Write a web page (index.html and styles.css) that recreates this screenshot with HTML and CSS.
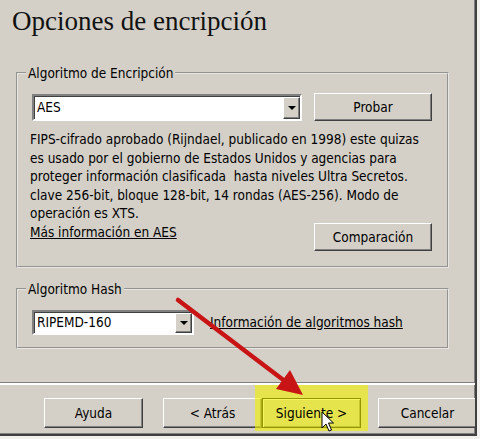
FILE: index.html
```html
<!DOCTYPE html>
<html lang="es">
<head>
  <meta charset="UTF-8">
  <title>Opciones de encripción</title>
  <link rel="stylesheet" href="styles.css">
</head>
<body>
  <div class="screen">
    <div class="window">
      <h1 class="title">Opciones de encripción</h1>

      <fieldset class="group group-enc">
        <legend>Algoritmo de Encripción</legend>
        <div class="row">
          <div class="combo combo-enc">
            <span class="combo-value">AES</span>
            <span class="combo-arrow"></span>
          </div>
          <button class="btn btn-side">Probar</button>
        </div>
        <p class="desc">
          <span>FIPS-cifrado aprobado (Rijndael, publicado en 1998) este quizas</span>
          <span>es usado por el gobierno de Estados Unidos y agencias para</span>
          <span>proteger información clasificada&nbsp; hasta niveles Ultra Secretos.</span>
          <span>clave 256-bit, bloque 128-bit, 14 rondas (AES-256). Modo de</span>
          <span>operación es XTS.</span>
        </p>
        <div class="row row-more">
          <a class="link" href="#">Más información en AES</a>
          <button class="btn btn-side">Comparación</button>
        </div>
      </fieldset>

      <fieldset class="group group-hash">
        <legend>Algoritmo Hash</legend>
        <div class="row row-hash">
          <div class="combo combo-hash">
            <span class="combo-value">RIPEMD-160</span>
            <span class="combo-arrow"></span>
          </div>
          <a class="link" href="#">Información de algoritmos hash</a>
        </div>
      </fieldset>

      <div class="separator"></div>

      <div class="nav">
        <button class="btn btn-nav btn-help">Ayuda</button>
        <button class="btn btn-nav btn-back">&lt; Atrás</button>
        <button class="btn btn-nav btn-default"><span class="btn-label">Siguiente &gt;</span></button>
        <button class="btn btn-nav btn-cancel">Cancelar</button>
      </div>
    </div>

    <!-- annotation drawn over the screenshot -->
    <div class="highlight"></div>
    <svg class="arrow" width="480" height="439" viewBox="0 0 480 439">
      <line x1="178" y1="300" x2="286" y2="382" stroke="#c81414" stroke-width="4.5" stroke-linecap="round"/>
      <polygon points="303,395 276,389 290,370" fill="#c81414"/>
    </svg>
    <svg class="cursor" width="14" height="22" viewBox="0 0 14 22">
      <path d="M1 1 L1 17 L5 13 L8 20 L10.5 19 L7.5 12 L12.5 12 Z" fill="#fff" stroke="#000" stroke-width="1"/>
    </svg>
  </div>
</body>
</html>
```

FILE: styles.css
```css
body {
  margin: 0;
  background: #f2f1ee;
  font-family: "DejaVu Sans Condensed", "DejaVu Sans", sans-serif;
  font-size: 13.5px;
  color: #000;
}

.screen {
  position: relative;
  width: 480px;
  height: 439px;
  overflow: hidden;
}

.window {
  width: 475px;
  height: 434px;
  background: #d4d0c8;
  border-right: 2px solid #404040;
  border-bottom: 2px solid #404040;
  box-shadow: inset -1px -1px 0 #808080;
  overflow: hidden;
}

.title {
  margin: 0;
  padding: 5px 0 0 12px;
  font-family: "Liberation Serif", serif;
  font-weight: normal;
  font-size: 27px;
  line-height: 32px;
  color: #111;
}

.group {
  width: 402px;
  margin: 0 0 0 16px;
  padding: 12px 15px 15px 12px;
  border: 2px groove #e8e6e2;
}

.group-enc {
  margin-top: 28px;
}

.group-hash {
  margin-top: 13px;
  padding-top: 13px;
  padding-bottom: 12px;
}

.group legend {
  margin-left: -4px;
  padding: 0 2px;
  line-height: 16px;
}

.row {
  display: flex;
  align-items: center;
  justify-content: space-between;
}

.row-more {
  align-items: flex-start;
}

.row-hash {
  justify-content: flex-start;
  gap: 16px;
}

.combo {
  display: flex;
  align-items: stretch;
  margin-left: 2px;
  background: #fff;
  border: 2px solid;
  border-color: #808080 #fff #fff #808080;
  box-shadow: inset 1px 1px 0 #404040;
  box-sizing: border-box;
}

.combo-enc {
  width: 270px;
  height: 27px;
}

.combo-hash {
  width: 162px;
  height: 25px;
}

.combo-value {
  flex: 1;
  padding: 0 3px;
  display: flex;
  align-items: center;
}

.combo-arrow {
  position: relative;
  width: 15px;
  margin: 1px 0 0 0;
  background: #d4d0c8;
  border: 1px solid;
  border-color: #fff #404040 #404040 #fff;
  box-shadow: inset -1px -1px 0 #808080;
}

.combo-arrow::after {
  content: "";
  position: absolute;
  left: 4px;
  top: 50%;
  margin-top: -2px;
  border-left: 4px solid transparent;
  border-right: 4px solid transparent;
  border-top: 4px solid #000;
}

.btn {
  font: inherit;
  color: #000;
  background: #d4d0c8;
  border: 1px solid;
  border-color: #fff #404040 #404040 #fff;
  box-shadow: inset -1px -1px 0 #808080;
  padding: 0;
  box-sizing: border-box;
}

.btn-side {
  width: 118px;
  height: 28px;
}

.desc {
  margin: 9px 0 0 0;
  line-height: 18.5px;
  white-space: nowrap;
}

.desc span {
  display: block;
}

.link {
  color: #000;
  text-decoration: underline;
  line-height: 19px;
}

.separator {
  margin-top: 33px;
  height: 1px;
  background: #808080;
  border-bottom: 2px solid #fff;
}

.nav {
  display: flex;
  margin-top: 13px;
  padding-left: 44px;
}

.btn-nav {
  flex: none;
  width: 99px;
  height: 30px;
}

.btn-back {
  margin-left: 20px;
}

.btn-cancel {
  margin-left: 17px;
}

.btn-default {
  border: 1px solid #000;
  box-shadow: inset 1px 1px 0 #fff, inset -1px -1px 0 #808080;
}

/* label stays crisp above the yellow marker */
.btn-label {
  position: relative;
  z-index: 2;
}

.highlight {
  position: absolute;
  z-index: 1;
  left: 255px;
  top: 385px;
  width: 113px;
  height: 46px;
  background: rgba(240, 240, 0, 0.62);
}

.arrow {
  position: absolute;
  z-index: 3;
  left: 0;
  top: 0;
  pointer-events: none;
}

.cursor {
  position: absolute;
  z-index: 4;
  left: 321px;
  top: 411px;
}
```
